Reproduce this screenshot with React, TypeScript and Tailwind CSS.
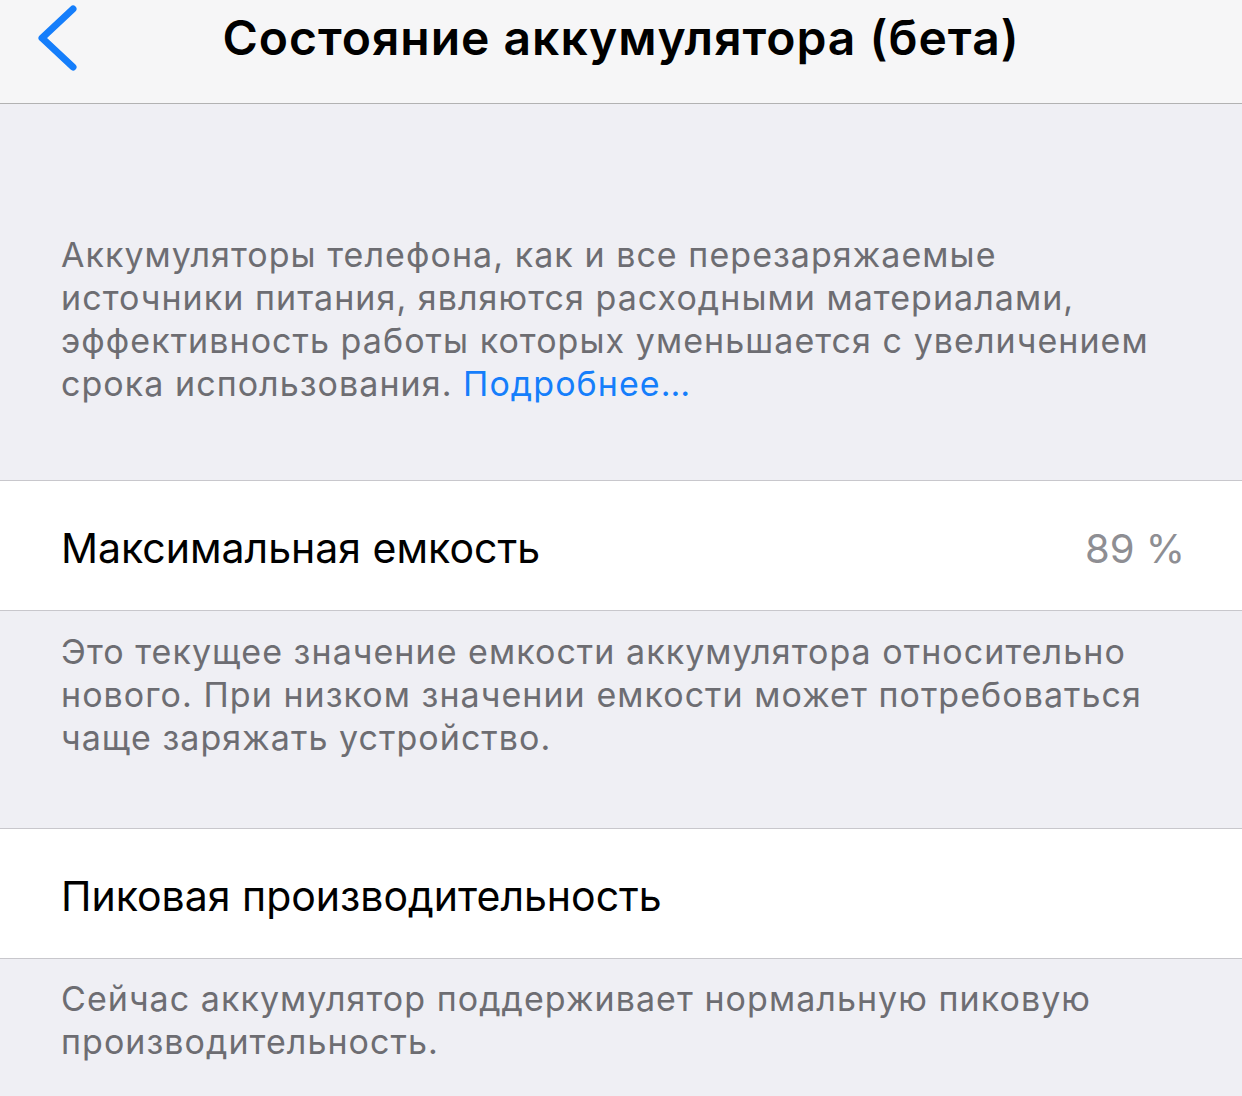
import React from 'react';

const font = { fontFamily: 'Inter, "Noto Sans", sans-serif' };

function Footer({ lines, className }: { lines: React.ReactNode[]; className: string }) {
  return (
    <div className={`px-[61px] text-[34px] leading-[43px] tracking-[1.05px] text-[#6d6d72] ${className}`}>
      {lines.map((line, i) => (
        <div key={i} className="whitespace-nowrap">
          {line}
        </div>
      ))}
    </div>
  );
}

function Row({ title, value }: { title: string; value?: string }) {
  return (
    <div className="flex h-[131px] items-center justify-between border-y border-[#c8c7cc] bg-white pl-[61px] pr-[57px] pt-[6px]">
      <span className="text-[41px] tracking-[0px] text-black">{title}</span>
      {value && <span className="text-[40px] tracking-[0px] text-[#8e8e93]">{value}</span>}
    </div>
  );
}

export default function App() {
  return (
    <div className="min-h-[1096px] w-[1242px] overflow-hidden bg-[#efeff4]" style={font}>
      <div className="relative flex h-[104px] items-center justify-center border-b border-[#b2b2b2] bg-[#f6f6f7] pb-[28px]">
        <svg className="absolute left-[34px] top-[3px]" width="46" height="70" viewBox="0 0 46 70">
          <path d="M39 6 L8 35 L39 64" fill="none" stroke="#157efb" strokeWidth="7" strokeLinecap="round" strokeLinejoin="round" />
        </svg>
        <h1 className="text-[48px] font-semibold tracking-[1px] text-black">Состояние аккумулятора (бета)</h1>
      </div>

      <Footer
        className="pt-[129px] pb-[75px]"
        lines={[
          'Аккумуляторы телефона, как и все перезаряжаемые',
          'источники питания, являются расходными материалами,',
          'эффективность работы которых уменьшается с увеличением',
          <>
            срока использования. <span className="text-[#157efb]">Подробнее…</span>
          </>,
        ]}
      />

      <Row title="Максимальная емкость" value="89 %" />

      <Footer
        className="pt-[19px] pb-[69px]"
        lines={[
          'Это текущее значение емкости аккумулятора относительно',
          'нового. При низком значении емкости может потребоваться',
          'чаще заряжать устройство.',
        ]}
      />

      <Row title="Пиковая производительность" />

      <Footer
        className="pt-[18px]"
        lines={['Сейчас аккумулятор поддерживает нормальную пиковую', 'производительность.']}
      />
    </div>
  );
}
